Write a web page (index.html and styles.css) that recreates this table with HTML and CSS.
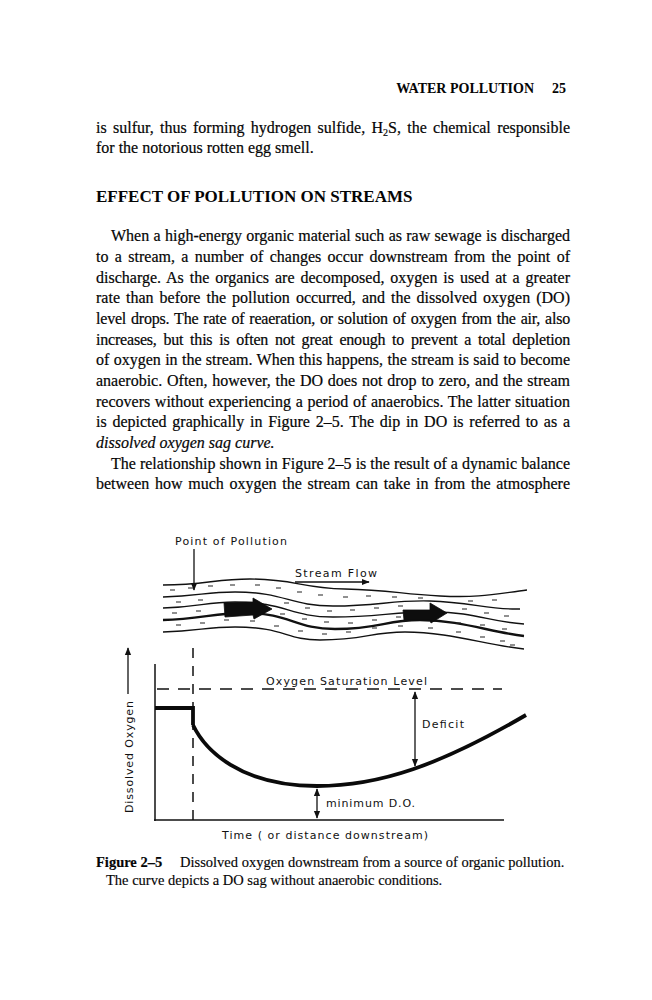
FILE: index.html
```html
<!DOCTYPE html>
<html lang="en">
<head>
<meta charset="utf-8">
<title>Water Pollution 25</title>
<link rel="stylesheet" href="styles.css">
</head>
<body>
<div class="page">
  <header class="running-head"><span class="rh-title">WATER POLLUTION</span><span class="rh-num">25</span></header>

  <p class="para">
    <span class="ln j">is sulfur, thus forming hydrogen sulfide, H<span class="sub">2</span>S, the chemical responsible</span>
    <span class="ln">for the notorious rotten egg smell.</span>
  </p>

  <h2 class="heading">EFFECT OF POLLUTION ON STREAMS</h2>

  <p class="para">
    <span class="ln j indent">When a high-energy organic material such as raw sewage is discharged</span>
    <span class="ln j">to a stream, a number of changes occur downstream from the point of</span>
    <span class="ln j">discharge. As the organics are decomposed, oxygen is used at a greater</span>
    <span class="ln j">rate than before the pollution occurred, and the dissolved oxygen (DO)</span>
    <span class="ln j tight">level drops. The rate of reaeration, or solution of oxygen from the air, also</span>
    <span class="ln j tight">increases, but this is often not great enough to prevent a total depletion</span>
    <span class="ln j">of oxygen in the stream. When this happens, the stream is said to become</span>
    <span class="ln j">anaerobic. Often, however, the DO does not drop to zero, and the stream</span>
    <span class="ln j">recovers without experiencing a period of anaerobics. The latter situation</span>
    <span class="ln j">is depicted graphically in Figure 2–5. The dip in DO is referred to as a</span>
    <span class="ln"><i>dissolved oxygen sag curve.</i></span>
  </p>
  <p class="para">
    <span class="ln j indent">The relationship shown in Figure 2–5 is the result of a dynamic balance</span>
    <span class="ln j">between how much oxygen the stream can take in from the atmosphere</span>
  </p>

  <figure class="fig">
    <svg class="fig-svg" width="480" height="320" viewBox="96 525 480 320" xmlns="http://www.w3.org/2000/svg">
      <defs>
        <marker id="ahd" viewBox="0 0 10 10" refX="9" refY="5" markerWidth="6" markerHeight="6" orient="auto-start-reverse">
          <path d="M0,1 L10,5 L0,9 Z" fill="#111"/>
        </marker>
      </defs>
      <g class="lbl">
        <text x="175" y="544.5" textLength="112" lengthAdjust="spacing">Point of Pollution</text>
        <text x="295" y="577" textLength="82" lengthAdjust="spacing">Stream Flow</text>
        <text x="266" y="685" textLength="161" lengthAdjust="spacing">Oxygen Saturation Level</text>
        <text x="422" y="728" textLength="42" lengthAdjust="spacing">Deficit</text>
        <text x="326" y="807" textLength="89" lengthAdjust="spacing">minimum D.O.</text>
        <text x="222" y="838.5" textLength="206" lengthAdjust="spacing">Time ( or distance downstream)</text>
        <text x="0" y="0" transform="translate(132.5,813) rotate(-90)" textLength="112" lengthAdjust="spacing">Dissolved Oxygen</text>
      </g>

      <!-- pointers -->
      <line x1="194" y1="549" x2="194" y2="590" class="thin" marker-end="url(#ahd)"/>
      <line x1="295" y1="582" x2="369" y2="582" class="thin" marker-end="url(#ahd)"/>
      <line x1="128" y1="694" x2="128" y2="648" class="thin" marker-end="url(#ahd)"/>

      <!-- stream banks -->
      <g class="bank">
        <path d="M163,585 C205,585 215,579 250,579 C295,579 300,588 345,589 C390,590 400,594 440,596 C480,598 495,594 527,590"/>
        <path d="M163,597 C200,596 205,592 235,592 C285,592 290,606 333,606 C380,606 390,600 430,601 C470,602 490,610 520,609"/>
        <path d="M163,608 C200,607 205,602 235,602 C285,602 290,617 333,617 C380,617 390,612 433,612 C475,612 490,622 524,624"/>
        <path class="bank-thick" d="M163,620 C200,619 215,613 245,613 C290,613 295,629 335,629 C380,629 385,620 420,620 C460,620 490,632 524,636"/>
        <path d="M163,632 C200,631 205,627 235,627 C285,627 285,640 320,640 C365,640 370,632 405,632 C450,632 485,645 524,649"/>
      </g>
      <path class="ripples" d="M170,590 h5 M188,588 h5 M208,586 h5 M230,585 h5 M255,585 h5 M276,588 h5 M297,592 h5 M318,595 h5 M343,597 h5 M366,596 h5 M392,597 h5 M418,598 h5 M468,601 h5 M492,600 h5
        M176,602 h5 M198,600 h5 M284,603 h5 M305,608 h5 M327,611 h5 M350,610 h5 M374,608 h5 M398,606 h5 M462,609 h5 M484,613 h5 M504,616 h5
        M172,613 h5 M196,611 h5 M280,614 h5 M302,619 h5 M324,622 h5 M348,623 h5 M372,620 h5 M396,617 h5 M456,623 h5 M480,625 h5 M502,629 h5
        M176,625 h5 M200,623 h5 M224,620 h5 M250,621 h5 M274,626 h5 M298,631 h5 M322,634 h5 M346,632 h5 M372,628 h5 M398,626 h5 M428,628 h5 M456,632 h5 M480,637 h5 M500,641 h5 M510,645 h5"/>

      <!-- flow arrows -->
      <path class="blk" d="M224,603 L253,602 L253,598 L272,609 L254,619 L253,615 L225,617 Z"/>
      <path class="blk" d="M403,610 L430,610 L430,603 L447,613 L431,623 L430,620 L404,620 Z"/>

      <!-- graph -->
      <line x1="155" y1="664" x2="155" y2="821" class="axis"/>
      <line x1="154" y1="820" x2="504" y2="820" class="axis"/>
      <line x1="193" y1="648" x2="193" y2="821" class="dash-v"/>
      <line x1="157" y1="689" x2="502" y2="689" class="dash-h"/>
      <path class="sag" d="M155,708 L193,708 L193,725"/>
      <path class="sag" d="M193,725 C205,750 240,786 317,786 C380,786 440,765 526,715"/>
      <line x1="415" y1="692" x2="415" y2="766" class="thin" marker-start="url(#ahd)" marker-end="url(#ahd)"/>
      <line x1="317" y1="789" x2="317" y2="818" class="thin" marker-start="url(#ahd)" marker-end="url(#ahd)"/>
    </svg>
  </figure>

  <div class="caption">
    <span class="cap-line"><b class="cap-label">Figure 2–5</b>Dissolved oxygen downstream from a source of organic pollution.</span>
    <span class="cap-line cap-cont">The curve depicts a DO sag without anaerobic conditions.</span>
  </div>
</div>
</body>
</html>
```

FILE: styles.css
```css
html, body {
  margin: 0;
  padding: 0;
  background: #ffffff;
}

body {
  color: #050505;
  font-family: "Liberation Serif", "Times New Roman", serif;
}

.page {
  width: 652px;
  height: 1000px;
  box-sizing: border-box;
  padding: 79px 82px 0 96px;
}

.running-head {
  display: flex;
  justify-content: flex-end;
  gap: 18px;
  font-weight: bold;
  font-size: 14px;
  line-height: 20px;
  height: 20px;
  margin-right: 4px;
}

.para {
  margin: 0;
  font-size: 16px;
  line-height: 20.65px;
  -webkit-text-stroke: 0.2px #050505;
}

.running-head + .para {
  margin-top: 18.5px;
}

.ln {
  display: block;
}

.j {
  text-align: justify;
  text-align-last: justify;
}

.indent {
  text-indent: 15px;
}

.tight {
  letter-spacing: -0.2px;
  word-spacing: -1.2px;
}

.sub {
  font-size: 10px;
  position: relative;
  top: 3px;
  line-height: 0;
}

.heading {
  margin: 27px 0 18.5px 0;
  font-size: 17px;
  line-height: 22px;
  font-weight: bold;
}

.fig {
  margin: 30px 0 0 0;
  padding: 0;
  height: 320px;
}

.fig-svg {
  display: block;
}

.lbl text {
  font-family: "DejaVu Sans", "Liberation Sans", sans-serif;
  font-size: 11px;
  fill: #111;
}

.thin {
  stroke: #111;
  stroke-width: 1.3;
  fill: none;
}

.bank path {
  fill: none;
  stroke: #111;
  stroke-width: 1.4;
}

.bank .bank-thick {
  stroke-width: 2.4;
}

.ripples {
  fill: none;
  stroke: #222;
  stroke-width: 1.1;
}

.blk {
  fill: #0d0d0d;
  stroke: #0d0d0d;
  stroke-width: 0.8;
}

.axis {
  stroke: #111;
  stroke-width: 1.5;
}

.dash-v {
  stroke: #111;
  stroke-width: 1.5;
  stroke-dasharray: 10 8;
}

.dash-h {
  stroke: #111;
  stroke-width: 1.4;
  stroke-dasharray: 12 9;
}

.sag {
  fill: none;
  stroke: #0a0a0a;
  stroke-width: 3.8;
  stroke-linecap: butt;
}

.caption {
  margin-top: 8px;
  font-size: 14.5px;
  line-height: 18px;
  -webkit-text-stroke: 0.15px #050505;
}

.cap-line {
  display: block;
}

.cap-label {
  display: inline-block;
  width: 84px;
}

.cap-cont {
  padding-left: 10px;
}
```
